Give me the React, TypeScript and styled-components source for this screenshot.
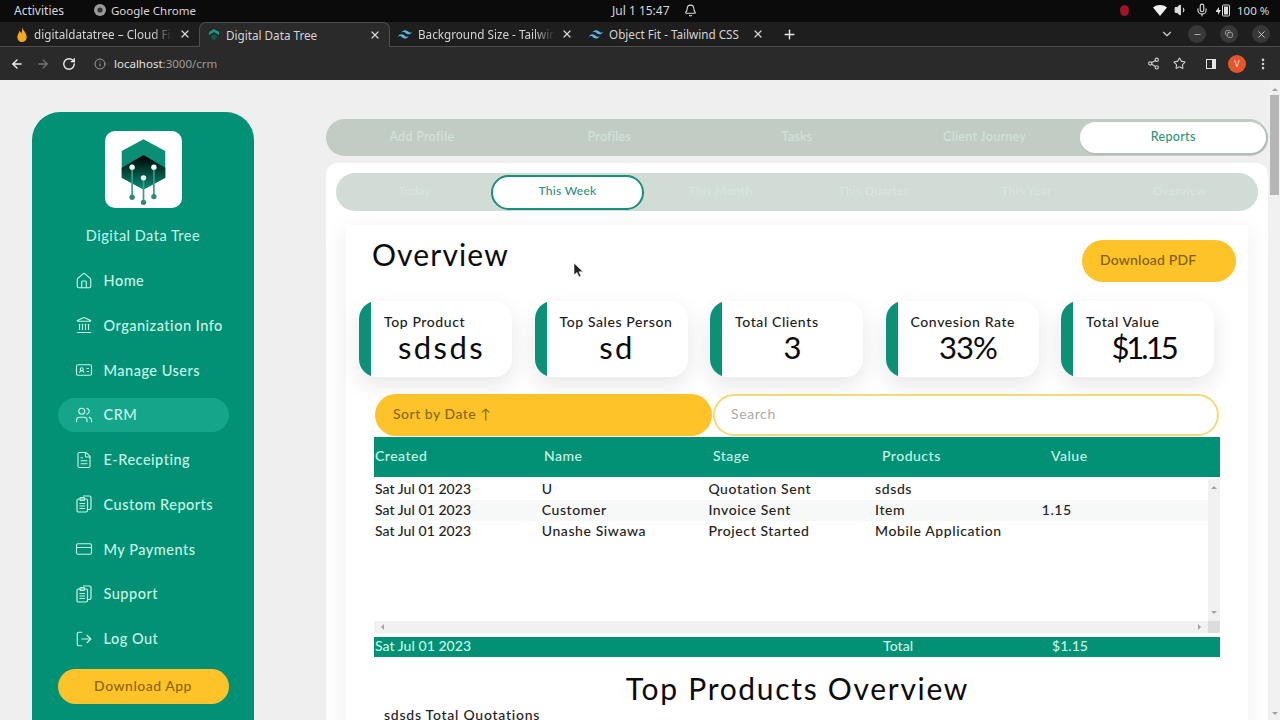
import React from "react";
import styled, { createGlobalStyle } from "styled-components";
import {
  Home, Landmark, IdCard, Users, FileText, CreditCard, LogOut,
  ArrowLeft, ArrowRight, RotateCw, Info, Share2, Star, EllipsisVertical, X, Plus,
  ChevronDown, Minus, Copy, Volume1, Mic, Bell,
} from "lucide-react";

const Global = createGlobalStyle`
  html, body { margin: 0; padding: 0; width: 1280px; height: 720px; overflow: hidden; background: #efefef; }
  * { box-sizing: border-box; }
  #root { width: 1280px; height: 720px; overflow: hidden; font-family: Lato, "Noto Sans", sans-serif; position: relative; }
`;

const Chrome = styled.div`
  height: 80px;
  display: flex;
  flex-direction: column;
  font-family: "Noto Sans", sans-serif;
  color: #d8d8d8;
`;
const Shell = styled.div`
  height: 22px;
  background: #0b0b0b;
  display: flex;
  align-items: center;
  font-size: 12px;
  padding-bottom: 2px;
`;
const ShellLeft = styled.div`
  width: 612px;
  padding-left: 14px;
  display: flex;
  align-items: center;
`;
const ShellCenter = styled.div`
  width: 508px;
  display: flex;
  align-items: center;
  gap: 14px;
`;
const ShellRight = styled.div`
  flex: 1;
  display: flex;
  align-items: center;
  gap: 7px;
  white-space: nowrap;
  font-size: 11.5px;
`;
const AppName = styled.span`
  display: flex;
  align-items: center;
  gap: 5px;
  margin-left: 30px;
  font-size: 11.5px;
`;
const TabStrip = styled.div`
  height: 25px;
  background: #1e1e1e;
  border-bottom: 1px solid #4e4e4e;
  display: flex;
  align-items: stretch;
  padding-left: 8px;
`;
const BrowserTab = styled.div<{ $active?: boolean }>`
  width: 191px;
  height: ${(p) => (p.$active ? "25px" : "24px")};
  display: flex;
  align-items: center;
  padding: 0 8px 0 8px;
  gap: 6px;
  font-size: 11.7px;
  color: #d4d4d4;
  white-space: nowrap;
  background: ${(p) => (p.$active ? "#2a2a2a" : "transparent")};
  ${(p) => p.$active && "border: 1px solid #4e4e4e; border-bottom: none; border-radius: 7px 7px 0 0;"}
`;
const TabTitle = styled.span<{ $fade?: boolean }>`
  flex: 1;
  overflow: hidden;
  min-width: 0;
  ${(p) => p.$fade && "-webkit-mask-image: linear-gradient(90deg, #000 85%, transparent);"}
`;
const PlusSlot = styled.div`
  display: flex;
  align-items: center;
  margin-left: 10px;
  color: #e8e8e8;
`;
const WindowControls = styled.div`
  margin-left: auto;
  display: flex;
  align-items: center;
  gap: 14px;
  padding-right: 10px;
  color: #cfcfcf;
`;
const WinButton = styled.div`
  width: 18px;
  height: 18px;
  border-radius: 50%;
  background: #383838;
  display: flex;
  align-items: center;
  justify-content: center;
`;
const Toolbar = styled.div`
  height: 33px;
  background: #2a2a2a;
  display: flex;
  align-items: center;
  padding-left: 10px;
  color: #d0d0d0;
`;
const NavGroup = styled.div`
  display: flex;
  align-items: center;
  gap: 12px;
`;
const Url = styled.div`
  display: flex;
  align-items: center;
  gap: 8px;
  margin-left: 18px;
  font-size: 11.5px;
  color: #9c9c9c;
`;
const UrlHost = styled.span`
  color: #e2e2e2;
`;
const ToolRight = styled.div`
  margin-left: auto;
  display: flex;
  align-items: center;
  padding-right: 10px;
  gap: 10px;
`;
const StarIcon = styled(Star)`
  margin-left: 3px;
`;
const PanelGlyph = styled.div`
  width: 10px;
  height: 10px;
  border: 1.5px solid #e6e6e6;
  border-right-width: 4px;
  margin: 0 2px 0 10px;
`;
const Avatar = styled.div`
  width: 18px;
  height: 18px;
  border-radius: 50%;
  background: #e4572a;
  color: #f6dccc;
  font-size: 9px;
  display: flex;
  align-items: center;
  justify-content: center;
`;
const RedDot = styled.div`
  width: 9px;
  height: 11px;
  border-radius: 50%;
  background: #a01428;
  margin-right: 17px;
`;

const Page = styled.div`
  height: 640px;
  display: flex;
  align-items: flex-start;
  background: #efefef;
  overflow: hidden;
`;

const Sidebar = styled.aside`
  width: 222px;
  height: 700px;
  margin: 32px 0 0 32px;
  flex: none;
  background: #029175;
  border-radius: 28px 28px 0 0;
  display: flex;
  flex-direction: column;
  align-items: center;
  padding-top: 19px;
  color: #c8f5e7;
`;
const LogoBox = styled.div`
  width: 77px;
  height: 77px;
  background: #fff;
  border-radius: 10px;
  flex: none;
`;
const BrandName = styled.div`
  font-size: 14.5px;
  letter-spacing: 0.5px;
  line-height: 20px;
  margin: 18px 0 18px;
`;
const NavList = styled.nav`
  width: 171px;
  display: flex;
  flex-direction: column;
  gap: 10.75px;
`;
const NavItem = styled.div<{ $active?: boolean }>`
  height: 34px;
  padding: 0 0 1px 17px;
  border-radius: 17px;
  display: flex;
  align-items: center;
  gap: 11px;
  font-size: 14.5px;
  font-weight: 500;
  letter-spacing: 0.5px;
  background: ${(p) => (p.$active ? "#14a58a" : "transparent")};
`;
const DownloadApp = styled.div`
  width: 171px;
  height: 35px;
  flex: none;
  margin-top: 13px;
  padding-bottom: 2px;
  border-radius: 18px;
  background: #fec328;
  color: #8a6510;
  font-size: 14px;
  font-weight: 500;
  letter-spacing: 0.5px;
  display: flex;
  align-items: center;
  justify-content: center;
`;
const Privacy = styled.div`
  font-size: 10px;
  margin-top: 13px;
  letter-spacing: 0.4px;
`;

const Main = styled.main`
  width: 942px;
  flex: none;
  margin: 39px 0 0 72px;
`;
const TabBar = styled.div`
  height: 37px;
  border-radius: 19px;
  background: #c1cdc4;
  display: grid;
  grid-template-columns: repeat(5, 1fr);
  align-items: center;
  padding: 0 2px;
`;
const TabItem = styled.div<{ $active?: boolean }>`
  height: 31px;
  margin: 0 ${(p) => (p.$active ? "0 0 2px" : "0")};
  padding-bottom: 2px;
  border-radius: 16px;
  display: flex;
  align-items: center;
  justify-content: center;
  font-size: 12.5px;
  font-weight: 500;
  letter-spacing: 0.3px;
  color: ${(p) => (p.$active ? "#2f927d" : "#d6e0da")};
  background: ${(p) => (p.$active ? "#fff" : "transparent")};
  ${(p) => p.$active && "box-shadow: 1px 1px 0 1px #b3bcb6;"}
`;
const Panel = styled.section`
  margin-top: 7px;
  background: #fff;
  border-radius: 12px 12px 0 0;
  padding: 10px 10px 0;
`;
const SubTabBar = styled.div`
  height: 38px;
  border-radius: 19px;
  background: #d0dcd5;
  display: grid;
  grid-template-columns: repeat(6, 1fr);
  align-items: center;
  padding: 0 2px;
`;
const SubTab = styled.div<{ $active?: boolean }>`
  height: 35px;
  padding-bottom: 3px;
  border-radius: 18px;
  display: flex;
  align-items: center;
  justify-content: center;
  font-size: 12px;
  font-weight: 500;
  letter-spacing: 0.3px;
  color: ${(p) => (p.$active ? "#2f8e7a" : "#dbe5e0")};
  background: ${(p) => (p.$active ? "#fff" : "transparent")};
  border: ${(p) => (p.$active ? "2px solid #17907a" : "none")};
`;
const ReportCard = styled.div`
  margin: 14px 10px 0;
  background: #fff;
  box-shadow: 0 4px 24px rgba(0, 0, 0, 0.07);
  padding: 15px 12px 0 13px;
  height: 520px;
`;
const HeaderRow = styled.div`
  height: 42px;
  display: flex;
  align-items: flex-start;
  justify-content: space-between;
  padding-left: 13px;
`;
const Title = styled.h1`
  margin: 0;
  font-size: 30px;
  font-weight: 400;
  line-height: 28px;
  letter-spacing: 1.15px;
  color: #0b0b0b;
`;
const PdfButton = styled.div`
  width: 154px;
  height: 42px;
  padding: 0 0 3px 18px;
  border-radius: 21px;
  background: #fec328;
  color: #80601a;
  font-size: 14px;
  font-weight: 500;
  letter-spacing: 0.2px;
  display: flex;
  align-items: center;
`;
const KpiRow = styled.div`
  margin: 19px 22px 0 0;
  display: flex;
  justify-content: space-between;
`;
const Kpi = styled.div`
  width: 153px;
  height: 76px;
  display: flex;
  border-radius: 18px;
  background: #fff;
  box-shadow: 0 8px 22px rgba(0, 0, 0, 0.1);
  overflow: hidden;
`;
const KpiStrip = styled.div`
  width: 12px;
  flex: none;
  background: #0b9176;
  border-radius: 12px 0 0 12px;
`;
const KpiBody = styled.div`
  flex: 1;
  padding-top: 13px;
  display: flex;
  flex-direction: column;
`;
const KpiLabel = styled.div`
  font-size: 14px;
  font-weight: 500;
  letter-spacing: 0.6px;
  line-height: 16px;
  padding-left: 13px;
  color: #1b1b1b;
  white-space: nowrap;
`;
const KpiValue = styled.div<{ $track: number }>`
  font-size: 31px;
  line-height: 34px;
  text-align: center;
  color: #0a0a0a;
  letter-spacing: ${(p) => p.$track}px;
`;
const Controls = styled.div`
  margin: 17px 17px 0 16px;
  display: flex;
  gap: 1px;
`;
const SortButton = styled.div`
  width: 337px;
  height: 42px;
  flex: none;
  padding: 0 0 3px 18px;
  border-radius: 21px;
  background: #fec328;
  color: #866a24;
  font-size: 14px;
  font-weight: 500;
  letter-spacing: 0.5px;
  display: flex;
  align-items: center;
  gap: 4px;
`;
const SearchBox = styled.div`
  flex: 1;
  height: 42px;
  padding: 0 0 3px 16px;
  border-radius: 21px;
  border: 2px solid #f5d978;
  background: #fff;
  color: #aaa;
  font-size: 14px;
  letter-spacing: 0.6px;
  display: flex;
  align-items: center;
`;
const TableWrap = styled.div`
  width: 846px;
  margin: 1px 0 0 15px;
`;
const TableHead = styled.div`
  height: 40px;
  background: #029175;
  color: #c8f5e7;
  display: grid;
  grid-template-columns: repeat(5, 169px);
  align-items: center;
  padding: 0 1px 4px 1px;
  font-size: 14px;
  font-weight: 500;
  letter-spacing: 0.5px;
`;
const TableViewport = styled.div`
  height: 156px;
  display: grid;
  grid-template-columns: 1fr 12px;
  grid-template-rows: 1fr 12px;
`;
const TableBody = styled.div`
  padding: 2px 0 0 0;
`;
const Row = styled.div<{ $shade?: boolean }>`
  height: 21px;
  padding: 0 0 2px 1px;
  display: grid;
  grid-template-columns: repeat(5, 166.7px);
  align-items: center;
  font-size: 14px;
  font-weight: 500;
  letter-spacing: 0.6px;
  color: #222;
  background: ${(p) => (p.$shade ? "#f7f9f9" : "transparent")};
  span:first-child {
    letter-spacing: 0.05px;
  }
`;
const ScrollV = styled.div`
  background: #f1f1f1;
  margin-top: 2px;
  display: flex;
  flex-direction: column;
  justify-content: space-between;
  align-items: center;
  padding: 4px 0;
`;
const ScrollH = styled.div`
  background: #f1f1f1;
  display: flex;
  justify-content: space-between;
  align-items: center;
  padding: 0 4px;
`;
const ScrollCorner = styled.div`
  background: #dcdcdc;
`;
const Arrow = styled.div<{ $dir: "up" | "down" | "left" | "right" }>`
  width: 0;
  height: 0;
  border: 3px solid transparent;
  ${(p) => `border-${{ up: "bottom", down: "top", left: "right", right: "left" }[p.$dir]}-color: #a3a3a3;`}
`;
const TableFoot = styled.div`
  margin-top: 4px;
  height: 20px;
  padding: 0 0 3px 1px;
  background: #029175;
  color: #c8f5e7;
  display: grid;
  grid-template-columns: 508px 169px 1fr;
  align-items: center;
  font-size: 14px;
  font-weight: 500;
  letter-spacing: 0.05px;
`;
const SectionTitle = styled.h2`
  margin: 13px 0 0;
  font-size: 30px;
  line-height: 36px;
  font-weight: 400;
  text-align: center;
  letter-spacing: 1.7px;
  color: #0b0b0b;
`;
const Quotation = styled.div`
  margin: 0 0 0 25px;
  font-size: 14px;
  line-height: 18px;
  font-weight: 500;
  letter-spacing: 0.75px;
  color: #222;
`;
const PageScroll = styled.div`
  width: 11px;
  height: 640px;
  margin-left: 1px;
  flex: none;
  background: #f1f1f1;
  padding: 15px 1px 0;
  position: relative;
`;
const Thumb = styled.div`
  height: 100px;
  background: #b5b5b5;
`;
const ScrollUp = styled.div`
  position: absolute;
  top: 5px;
  left: 3px;
`;
const ScrollDown = styled.div`
  position: absolute;
  bottom: 2px;
  left: 3px;
`;
const Cursor = styled.svg`
  position: absolute;
  left: 573px;
  top: 263px;
`;

const Logo = () => (
  <svg width="77" height="77" viewBox="0 0 230 230">
    <defs>
      <linearGradient id="lg" x1="0" y1="0" x2="0" y2="1">
        <stop offset="0" stopColor="#000" />
        <stop offset="1" stopColor="#0a8f74" />
      </linearGradient>
    </defs>
    <path d="M115 25 180 60 180 140 115 175 50 140 50 60Z" fill="#0a8f74" />
    <path d="M115 72 180 110 180 140 115 175 50 140 50 110Z" fill="url(#lg)" />
    <g stroke="#3d9c88" strokeWidth="5">
      <path d="M81 108V198M115 140V213M146 108V196" />
    </g>
    <g fill="#2b8b77">
      <circle cx="81" cy="198" r="8" />
      <circle cx="115" cy="213" r="8" />
      <circle cx="146" cy="196" r="8" />
    </g>
    <g fill="#f3fbf9">
      <circle cx="81" cy="108" r="8" />
      <circle cx="115" cy="140" r="8" />
      <circle cx="146" cy="108" r="8" />
    </g>
  </svg>
);
const Flame = () => (
  <svg width="12" height="15" viewBox="0 0 12 16">
    <path d="M6 0C7 4 11 6 11 11A5 5 0 0 1 1 11C1 8 3 7 3 4 4.500 5 5 6 5 7 6 5 6.500 3 6 0Z" fill="#f5a623" />
  </svg>
);
const TabLogo = () => (
  <svg width="12" height="14" viewBox="0 0 12 14">
    <path d="M6 1 11 4V7L6 4 1 7V4Z" fill="#1a9a80" />
    <path d="M6 6 9.500 8.500 6 13 2.500 8.500Z" fill="#0d5a4c" />
  </svg>
);
const Wind = () => (
  <svg width="14" height="9" viewBox="0 0 24 15">
    <path
      d="M12 0C8.800 0 6.800 1.600 6 4.800 7.200 3.200 8.600 2.600 10.200 3c.9.2 1.560.89 2.290 1.640C13.690 5.850 15.070 7.200 18 7.200c3.200 0 5.200-1.600 6-4.800-1.200 1.600-2.600 2.200-4.200 1.800-.9-.2-1.560-.89-2.290-1.640C16.310 1.350 14.930 0 12 0ZM6 7.200c-3.200 0-5.200 1.600-6 4.800 1.200-1.600 2.600-2.200 4.200-1.800.9.2 1.560.89 2.290 1.640C7.690 13.050 9.070 14.400 12 14.400c3.200 0 5.200-1.600 6-4.800-1.200 1.600-2.600 2.200-4.200 1.800-.9-.2-1.560-.89-2.290-1.640C10.310 8.550 8.930 7.200 6 7.200Z"
      fill="#59b8e6"
    />
  </svg>
);
const ChromeGlyph = () => (
  <svg width="12" height="12" viewBox="0 0 12 12">
    <circle cx="6" cy="6" r="6" fill="#9a9a9a" />
    <circle cx="6" cy="6" r="2.600" fill="#333" />
  </svg>
);
const Battery = () => (
  <svg width="14" height="13" viewBox="0 0 14 13">
    <path d="M0 7 3 3V6H5L2 11V8H0Z" fill="#ddd" />
    <rect x="6.500" y="1" width="7" height="11" rx="1" fill="none" stroke="#ddd" />
    <rect x="8" y="2.500" width="4" height="8" fill="#ddd" />
  </svg>
);
const WifiSolid = () => (
  <svg width="14" height="11" viewBox="0 0 14 11">
    <path d="M0 2.500C4-.8 10-.8 14 2.500L7 11Z" fill="#f0f0f0" />
  </svg>
);
const StackedClipboard = ({ size = 18 }: { size?: number; strokeWidth?: number }) => (
  <svg width={size} height={size} viewBox="0 0 18 18" fill="none" stroke="currentColor" strokeWidth="1.2" strokeLinejoin="round">
    <rect x="2" y="4" width="10.500" height="13" rx="1.500" />
    <rect x="5" y="2.500" width="4.500" height="3" rx="0.800" />
    <path d="M8 1h6.500A1.500 1.500 0 0 1 16 2.500V13a1.500 1.500 0 0 1-1.500 1.500H12.500M4.500 8.500h5.500M4.500 11h5.500M4.500 13.500h5.500" />
  </svg>
);

const navItems = [
  { label: "Home", Icon: Home },
  { label: "Organization Info", Icon: Landmark },
  { label: "Manage Users", Icon: IdCard },
  { label: "CRM", Icon: Users, active: true },
  { label: "E-Receipting", Icon: FileText },
  { label: "Custom Reports", Icon: StackedClipboard },
  { label: "My Payments", Icon: CreditCard },
  { label: "Support", Icon: StackedClipboard },
  { label: "Log Out", Icon: LogOut },
];
const kpis: [string, string, number][] = [
  ["Top Product", "sdsds", 2.4],
  ["Top Sales Person", "sd", 2.4],
  ["Total Clients", "3", 0],
  ["Convesion Rate", "33%", -0.9],
  ["Total Value", "$1.15", -3],
];
const rows = [
  ["Sat Jul 01 2023", "U", "Quotation Sent", "sdsds", ""],
  ["Sat Jul 01 2023", "Customer", "Invoice Sent", "Item", "1.15"],
  ["Sat Jul 01 2023", "Unashe Siwawa", "Project Started", "Mobile Application", ""],
];
const browserTabs = [
  { title: "digitaldatatree – Cloud Firestore", icon: <Flame />, fade: true },
  { title: "Digital Data Tree", icon: <TabLogo />, active: true },
  { title: "Background Size - Tailwind CSS", icon: <Wind />, fade: true },
  { title: "Object Fit - Tailwind CSS", icon: <Wind /> },
];

export default function App() {
  return (
    <>
      <Global />
      <Chrome>
        <Shell>
          <ShellLeft>
            Activities
            <AppName>
              <ChromeGlyph />
              Google Chrome
            </AppName>
          </ShellLeft>
          <ShellCenter>
            Jul 1 15:47
            <Bell size={13} />
          </ShellCenter>
          <ShellRight>
            <RedDot />
            <WifiSolid />
            <Volume1 size={14} fill="#ddd" />
            <Mic size={14} />
            <Battery />
            100 %
          </ShellRight>
        </Shell>
        <TabStrip>
          {browserTabs.map((t) => (
            <BrowserTab key={t.title} $active={t.active}>
              {t.icon}
              <TabTitle $fade={t.fade}>{t.title}</TabTitle>
              <X size={12} strokeWidth={2.5} />
            </BrowserTab>
          ))}
          <PlusSlot>
            <Plus size={15} strokeWidth={2.2} />
          </PlusSlot>
          <WindowControls>
            <ChevronDown size={14} />
            <WinButton>
              <Minus size={9} />
            </WinButton>
            <WinButton>
              <Copy size={8} />
            </WinButton>
            <WinButton>
              <X size={11} />
            </WinButton>
          </WindowControls>
        </TabStrip>
        <Toolbar>
          <NavGroup>
            <ArrowLeft size={14} strokeWidth={2.4} color="#eee" />
            <ArrowRight size={14} strokeWidth={2.2} color="#777" />
            <RotateCw size={14} strokeWidth={2.4} color="#eee" />
          </NavGroup>
          <Url>
            <Info size={12} />
            <span>
              <UrlHost>localhost</UrlHost>:3000/crm
            </span>
          </Url>
          <ToolRight>
            <Share2 size={13} />
            <StarIcon size={13} />
            <PanelGlyph />
            <Avatar>V</Avatar>
            <EllipsisVertical size={14} strokeWidth={2.5} />
          </ToolRight>
        </Toolbar>
      </Chrome>

      <Page>
        <Sidebar>
          <LogoBox>
            <Logo />
          </LogoBox>
          <BrandName>Digital Data Tree</BrandName>
          <NavList>
            {navItems.map(({ label, Icon, active }) => (
              <NavItem key={label} $active={active}>
                <Icon size={18} strokeWidth={1.5} />
                {label}
              </NavItem>
            ))}
          </NavList>
          <DownloadApp>Download App</DownloadApp>
          <Privacy>Privacy Policy</Privacy>
        </Sidebar>

        <Main>
          <TabBar>
            {["Add Profile", "Profiles", "Tasks", "Client Journey"].map((t) => (
              <TabItem key={t}>{t}</TabItem>
            ))}
            <TabItem $active>Reports</TabItem>
          </TabBar>
          <Panel>
            <SubTabBar>
              {["Today", "This Week", "This Month", "This Quarter", "This Year", "Overview"].map((t) => (
                <SubTab key={t} $active={t === "This Week"}>
                  {t}
                </SubTab>
              ))}
            </SubTabBar>
            <ReportCard>
              <HeaderRow>
                <Title>Overview</Title>
                <PdfButton>Download PDF</PdfButton>
              </HeaderRow>
              <KpiRow>
                {kpis.map(([label, value, track]) => (
                  <Kpi key={label}>
                    <KpiStrip />
                    <KpiBody>
                      <KpiLabel>{label}</KpiLabel>
                      <KpiValue $track={track}>{value}</KpiValue>
                    </KpiBody>
                  </Kpi>
                ))}
              </KpiRow>
              <Controls>
                <SortButton>Sort by Date ↑</SortButton>
                <SearchBox>Search</SearchBox>
              </Controls>
              <TableWrap>
                <TableHead>
                  {["Created", "Name", "Stage", "Products", "Value"].map((h) => (
                    <span key={h}>{h}</span>
                  ))}
                </TableHead>
                <TableViewport>
                  <TableBody>
                    {rows.map((r, i) => (
                      <Row key={i} $shade={i === 1}>
                        {r.map((c, j) => (
                          <span key={j}>{c}</span>
                        ))}
                      </Row>
                    ))}
                  </TableBody>
                  <ScrollV>
                    <Arrow $dir="up" />
                    <Arrow $dir="down" />
                  </ScrollV>
                  <ScrollH>
                    <Arrow $dir="left" />
                    <Arrow $dir="right" />
                  </ScrollH>
                  <ScrollCorner />
                </TableViewport>
                <TableFoot>
                  <span>Sat Jul 01 2023</span>
                  <span>Total</span>
                  <span>$1.15</span>
                </TableFoot>
              </TableWrap>
              <SectionTitle>Top Products Overview</SectionTitle>
              <Quotation>sdsds Total Quotations</Quotation>
            </ReportCard>
          </Panel>
        </Main>

        <PageScroll>
          <ScrollUp>
            <Arrow $dir="up" />
          </ScrollUp>
          <Thumb />
          <ScrollDown>
            <Arrow $dir="down" />
          </ScrollDown>
        </PageScroll>
      </Page>

      <Cursor width="11" height="15" viewBox="0 0 11 15">
        <path d="M1 0V12L4 9.500 6 14 8 13 6 8.800H10Z" fill="#222" stroke="#fff" strokeWidth="0.6" />
      </Cursor>
    </>
  );
}
